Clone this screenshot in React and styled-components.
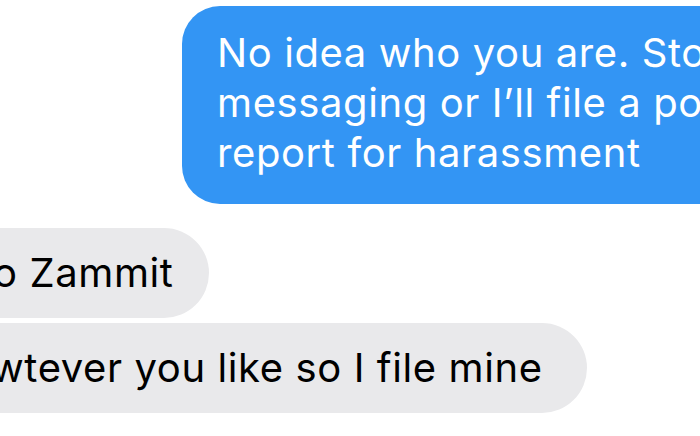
import React from "react";
import styled, { createGlobalStyle } from "styled-components";

const Global = createGlobalStyle`
  html, body {
    margin: 0;
    padding: 0;
    background: #ffffff;
    width: 700px;
    height: 436px;
    overflow: hidden;
  }
  body {
    font-family: Inter, "Noto Sans", "Liberation Sans", sans-serif;
    -webkit-font-smoothing: antialiased;
  }
`;

const Thread = styled.div`
  width: 700px;
  height: 436px;
  overflow: hidden;
  display: flex;
  flex-direction: column;
  align-items: flex-start;
  padding-top: 6px;
  box-sizing: border-box;
`;

const Bubble = styled.div`
  font-size: 40px;
  line-height: 50px;
  letter-spacing: 0.6px;
  white-space: nowrap;
  box-sizing: border-box;
  flex: none;
`;

const Sent = styled(Bubble)`
  background: #3395f4;
  color: #ffffff;
  border-radius: 38px;
  margin-left: 182px;
  padding: 22px 120px 26px 35px;
`;

const Received = styled(Bubble)`
  background: #e9e9eb;
  color: #000000;
  border-radius: 45px;
  height: 90px;
  padding: 20px ${(p) => p.$padRight}px 20px ${(p) => p.$padLeft}px;
  margin-left: ${(p) => p.$offset}px;
  margin-top: ${(p) => p.$gap}px;
`;

const Line = styled.div`
  display: block;
`;

export default function App() {
  return (
    <>
      <Global />
      <Thread>
        <Sent>
          <Line>No idea who you are. Sto</Line>
          <Line>messaging or I’ll file a po</Line>
          <Line>report for harassment</Line>
        </Sent>
        <Received $offset={-60} $padLeft={53} $padRight={35} $gap={24}>
          o Zammit
        </Received>
        <Received $offset={-60} $padLeft={51} $padRight={44} $gap={5}>
          wtever you like so I file mine
        </Received>
      </Thread>
    </>
  );
}
